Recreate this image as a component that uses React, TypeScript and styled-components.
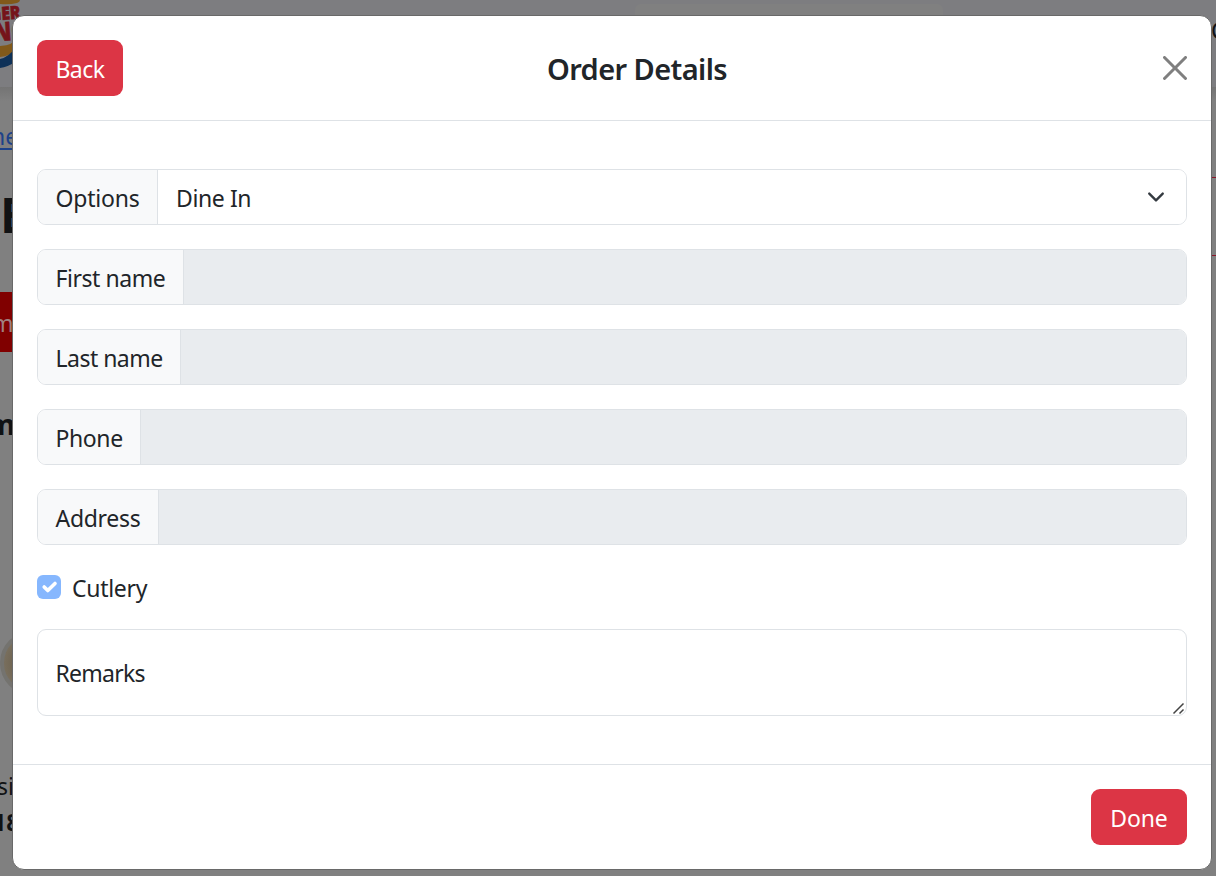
import React from 'react';
import styled, { createGlobalStyle } from 'styled-components';

const GlobalStyle = createGlobalStyle`
  *, *::before, *::after { box-sizing: border-box; }
  body {
    margin: 0;
    background: #808080;
    color: #212529;
    font: 400 23px/36px 'Noto Sans', 'Segoe UI', sans-serif;
    overflow: hidden;
  }
`;

const Screen = styled.div`
  position: relative;
  width: 1216px;
  height: 876px;
  overflow: hidden;
`;

const Page = styled.div`
  height: 100%;
  display: flex;
  flex-direction: column;
`;

const TopBar = styled.header`
  height: 87px;
  flex: none;
  display: flex;
  justify-content: space-between;
  background: #7d7d80;
`;

const SearchBox = styled.div`
  width: 308px;
  height: 32px;
  margin: 4px 0 0 595px;
  border-radius: 6px;
  background: #808080;
`;

const CartLabel = styled.span`
  width: 4px;
  margin: 12px 0 0 auto;
  overflow: hidden;
  color: #101214;
  text-indent: -1px;
`;

const PageBody = styled.div`
  flex: 1;
  display: flex;
  justify-content: space-between;
  background: linear-gradient(#747474, #808080 14px);
`;

const LeftStrip = styled.div`
  width: 30px;
  overflow: hidden;
  white-space: nowrap;
`;

const Crumb = styled.div`
  height: 36px;
  margin: 31px 0 0;
  color: #1d4289;
  text-indent: -9px;
  text-decoration: underline;
  text-decoration-thickness: 2px;
  text-underline-offset: 3px;
`;

const Heading = styled.div`
  height: 60px;
  margin-top: 31px;
  font: 700 48px/60px 'Noto Sans', sans-serif;
  color: #101214;
`;

const Tab = styled.div`
  height: 60px;
  margin-top: 47px;
  padding-top: 13px;
  background: #800000;
  color: #a08080;
  text-indent: -8px;
`;

const Section = styled.div`
  height: 40px;
  margin-top: 52px;
  font: 700 29px/40px 'Noto Sans', sans-serif;
  color: #101214;
  text-indent: -13px;
`;

const Dish = styled.div`
  width: 64px;
  height: 64px;
  margin-top: 187px;
  border: 4px solid #74736f;
  border-radius: 50%;
  background: radial-gradient(#5f513c, #837b6b);
`;

const Item = styled.div<{ $strong?: boolean }>`
  height: 36px;
  margin-top: ${(p) => (p.$strong ? '0' : '73px')};
  font-weight: ${(p) => (p.$strong ? 700 : 400)};
  color: #101214;
  text-indent: ${(p) => (p.$strong ? '-7px' : '-3px')};
`;

const SidePanel = styled.div`
  width: 30px;
  height: 79px;
  margin-top: 90px;
  border-top: 1px solid #8a1428;
  border-bottom: 1px solid #8a1428;
`;

const Modal = styled.section`
  position: absolute;
  left: 12px;
  top: 15px;
  width: 1200px;
  height: 855px;
  display: flex;
  flex-direction: column;
  border: 1px solid #696969;
  border-radius: 12px;
  background: #fff;
`;

const ModalHeader = styled.header`
  height: 105px;
  flex: none;
  display: grid;
  grid-template-columns: 1fr auto 1fr;
  align-items: center;
  padding: 0 24px;
  border-bottom: 1px solid #dee2e6;
`;

const Title = styled.h1`
  margin: 2px 0 0 50px;
  font-size: 29px;
  font-weight: 600;
`;

const Button = styled.button<{ $w: number }>`
  width: ${(p) => p.$w}px;
  height: 56px;
  padding: 1px 0 0;
  border: 0;
  border-radius: 9px;
  background: #dc3545;
  color: #fff;
  font: inherit;
`;

const Close = styled.button`
  display: flex;
  justify-self: end;
  padding: 0;
  border: 0;
  background: none;
  color: #7f7f7f;
`;

const ModalBody = styled.form`
  flex: 1;
  display: flex;
  flex-direction: column;
  padding: 48px 24px 0;
`;

const Field = styled.div`
  height: 56px;
  flex: none;
  display: flex;
  margin-bottom: 24px;
  border: 1px solid #dee2e6;
  border-radius: 9px;
  overflow: hidden;
`;

const FieldLabel = styled.label<{ $w: number }>`
  width: ${(p) => p.$w}px;
  padding: 10px 0 0 17.5px;
  border-right: 1px solid #dee2e6;
  background: #f8f9fa;
  white-space: nowrap;
`;

const FieldValue = styled.div<{ $disabled?: boolean }>`
  flex: 1;
  display: flex;
  justify-content: space-between;
  padding: 10px 21px 0 18px;
  background: ${(p) => (p.$disabled ? '#e9ecef' : '#fff')};
`;

const Chevron = styled.svg`
  margin-top: 8px;
`;

const CheckRow = styled.label`
  height: 36px;
  display: flex;
  gap: 11px;
  margin-bottom: 24px;
  padding-top: 1px;
`;

const CheckBox = styled.span`
  width: 24px;
  height: 24px;
  margin-top: 5px;
  border-radius: 6px;
  background: #86b7fe;
`;

const Remarks = styled.div`
  height: 87px;
  display: flex;
  justify-content: space-between;
  padding: 25px 1px 0 17.5px;
  border: 1px solid #dee2e6;
  border-radius: 9px;
`;

const Grip = styled.svg`
  align-self: flex-end;
`;

const ModalFooter = styled.footer`
  height: 105px;
  flex: none;
  display: flex;
  justify-content: flex-end;
  padding: 24px 24px 0;
  border-top: 1px solid #dee2e6;
`;

const Spaced = styled.span<{ $ls: number }>`
  letter-spacing: ${(p) => p.$ls}px;
`;

const Logo = () => (
  <svg width="40" height="87" viewBox="0 0 40 87">
    <path d="M0 0H20Q20 2 17 3Q9 5 0 4Z" fill="#81591a" />
    <path d="M0 46Q14 45 16 38V50Q10 56 0 57Z" fill="#81591a" />
    <path d="M0 59Q9 57 15 48V62Q8 67 0 68Z" fill="#0e3158" />
    <g fill="#75141a" stroke="#75141a" strokeWidth="0.6" fontFamily="Noto Sans" fontWeight="900">
      <text x="-10" y="20" fontSize="18" textLength="31" lengthAdjust="spacingAndGlyphs" transform="rotate(-4 0 20)">GER</text>
      <text x="-6" y="41" fontSize="26" textLength="34" lengthAdjust="spacingAndGlyphs" transform="rotate(-4 0 41)">NG</text>
    </g>
  </svg>
);

const fields = [
  { label: 'First name', width: 146, ls: -0.45 },
  { label: 'Last name', width: 143, ls: -0.52 },
  { label: 'Phone', width: 103, ls: -0.4 },
  { label: 'Address', width: 121, ls: -0.3 },
];

export default function App() {
  return (
    <>
      <GlobalStyle />
      <Screen>
        <Page>
          <TopBar>
            <Logo />
            <SearchBox />
            <CartLabel>C</CartLabel>
          </TopBar>
          <PageBody>
            <LeftStrip>
              <Crumb>ne</Crumb>
              <Heading>E</Heading>
              <Tab>m</Tab>
              <Section>m</Section>
              <Dish />
              <Item>si</Item>
              <Item $strong>18</Item>
            </LeftStrip>
            <SidePanel />
          </PageBody>
        </Page>
        <Modal>
          <ModalHeader>
            <Button $w={86}><Spaced $ls={-0.5}>Back</Spaced></Button>
            <Title><Spaced $ls={-0.58}>Order Details</Spaced></Title>
            <Close aria-label="Close">
              <svg width="24" height="24" viewBox="0 0 16 16" fill="currentColor">
                <path d="M.293.293a1 1 0 0 1 1.414 0L8 6.586 14.293.293a1 1 0 1 1 1.414 1.414L9.414 8l6.293 6.293a1 1 0 0 1-1.414 1.414L8 9.414l-6.293 6.293a1 1 0 0 1-1.414-1.414L6.586 8 .293 1.707a1 1 0 0 1 0-1.414z" />
              </svg>
            </Close>
          </ModalHeader>
          <ModalBody>
            <Field>
              <FieldLabel $w={120}><Spaced $ls={-0.2}>Options</Spaced></FieldLabel>
              <FieldValue>
                <Spaced $ls={-0.4}>Dine In</Spaced>
                <Chevron width="18" height="18" viewBox="0 0 16 16">
                  <path d="m2 5 6 6 6-6" fill="none" stroke="#343a40" strokeWidth="2.1" strokeLinecap="round" strokeLinejoin="round" />
                </Chevron>
              </FieldValue>
            </Field>
            {fields.map((f) => (
              <Field key={f.label}>
                <FieldLabel $w={f.width}><Spaced $ls={f.ls}>{f.label}</Spaced></FieldLabel>
                <FieldValue $disabled />
              </Field>
            ))}
            <CheckRow>
              <CheckBox>
                <svg width="24" height="24" viewBox="0 0 20 20" display="block">
                  <path d="m6 10 3 3 6-6" fill="none" stroke="#fff" strokeWidth="3" strokeLinecap="round" strokeLinejoin="round" />
                </svg>
              </CheckBox>
              <Spaced $ls={-0.3}>Cutlery</Spaced>
            </CheckRow>
            <Remarks>
              <Spaced $ls={-0.75}>Remarks</Spaced>
              <Grip width="13" height="13" viewBox="0 0 13 13">
                <path d="M1.5 11.5 11.5 1.5M7.5 11.5 11.5 7.5" fill="none" stroke="#444" strokeWidth="1.5" />
              </Grip>
            </Remarks>
          </ModalBody>
          <ModalFooter>
            <Button $w={96}><Spaced $ls={-0.1}>Done</Spaced></Button>
          </ModalFooter>
        </Modal>
      </Screen>
    </>
  );
}
